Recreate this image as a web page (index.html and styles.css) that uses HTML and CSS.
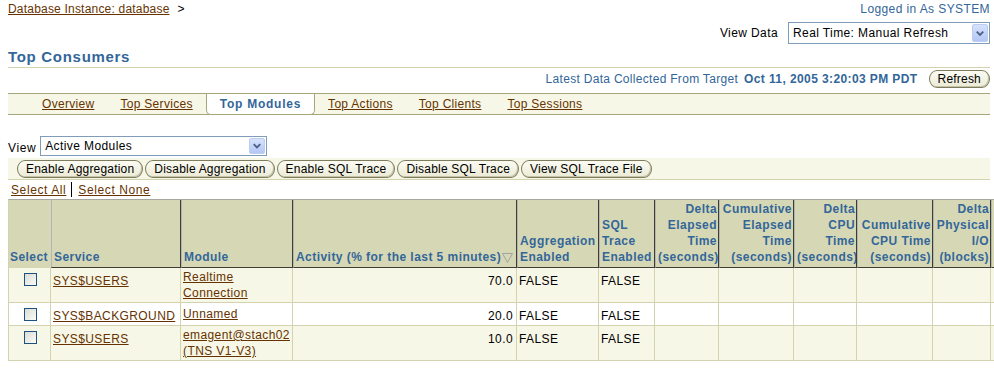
FILE: index.html
```html
<!DOCTYPE html>
<html>
<head>
<meta charset="utf-8">
<title>Top Consumers</title>
<link rel="stylesheet" href="styles.css">
</head>
<body>
<div class="page">
  <div class="top">
    <div class="crumbs"><a href="#">Database Instance: database</a><span class="sep">&gt;</span></div>
    <div class="user">Logged in As SYSTEM</div>
  </div>
  <div class="viewdata">
    <span>View Data</span>
    <div class="select wide"><span class="val">Real Time: Manual Refresh</span><span class="arrow"><svg width="15" height="16" viewBox="0 0 15 16"><path d="M4 6.5 L7.5 10 L11 6.5" fill="none" stroke="#4d6185" stroke-width="2"/></svg></span></div>
  </div>
  <h1>Top Consumers</h1>
  <div class="collected">
    <span>Latest Data Collected From Target</span>
    <b>Oct 11, 2005 3:20:03 PM PDT</b>
    <button class="btn refresh">Refresh</button>
  </div>
  <div class="tabs">
    <a class="tab" href="#">Overview</a>
    <a class="tab" href="#">Top Services</a>
    <span class="tab active">Top Modules</span>
    <a class="tab" href="#">Top Actions</a>
    <a class="tab" href="#">Top Clients</a>
    <a class="tab" href="#">Top Sessions</a>
  </div>
  <div class="viewrow">
    <span>View</span>
    <div class="select view"><span class="val">Active Modules</span><span class="arrow"><svg width="15" height="16" viewBox="0 0 15 16"><path d="M4 6 L7.5 9.5 L11 6" fill="none" stroke="#4d6185" stroke-width="2"/></svg></span></div>
  </div>
  <div class="btnbar">
    <button class="btn">Enable Aggregation</button>
    <button class="btn">Disable Aggregation</button>
    <button class="btn">Enable SQL Trace</button>
    <button class="btn">Disable SQL Trace</button>
    <button class="btn">View SQL Trace File</button>
  </div>
  <div class="selall"><a href="#">Select All</a><span class="bar"></span><a href="#">Select None</a></div>
  <table class="grid">
    <colgroup>
      <col style="width:42px"><col style="width:130px"><col style="width:112px"><col style="width:224px"><col style="width:82px"><col style="width:56px"><col style="width:64px"><col style="width:75px"><col style="width:63px"><col style="width:76px"><col style="width:58px"><col style="width:84px">
    </colgroup>
    <thead>
      <tr>
        <th class="sel">Select</th>
        <th class="s">Service</th>
        <th class="s">Module</th>
        <th class="s act">Activity (% for the last 5 minutes)<svg class="sort" width="11" height="10" viewBox="0 0 11 10"><path d="M0.5 0.5 H10.5 L5.5 9.5 Z" fill="none" stroke="#a3a3a3"/></svg></th>
        <th class="s">Aggregation<br>Enabled</th>
        <th class="s">SQL<br>Trace<br>Enabled</th>
        <th class="s r">Delta<br>Elapsed<br>Time<br>(seconds)</th>
        <th class="s r">Cumulative<br>Elapsed<br>Time<br>(seconds)</th>
        <th class="s r">Delta<br>CPU<br>Time<br>(seconds)</th>
        <th class="s r">Cumulative<br>CPU Time<br>(seconds)</th>
        <th class="s r">Delta<br>Physical<br>I/O<br>(blocks)</th>
        <th class="s r">Cumulative<br>Physical I/O<br>(blocks)</th>
      </tr>
    </thead>
    <tbody>
      <tr class="odd">
        <td class="c"><span class="cb"></span></td>
        <td><a href="#">SYS$USERS</a></td>
        <td class="m"><a href="#">Realtime<br>Connection</a></td>
        <td class="r">70.0</td>
        <td>FALSE</td>
        <td>FALSE</td>
        <td></td><td></td><td></td><td></td><td></td><td></td>
      </tr>
      <tr class="even">
        <td class="c"><span class="cb"></span></td>
        <td><a href="#">SYS$BACKGROUND</a></td>
        <td class="m"><a href="#">Unnamed</a></td>
        <td class="r">20.0</td>
        <td>FALSE</td>
        <td>FALSE</td>
        <td></td><td></td><td></td><td></td><td></td><td></td>
      </tr>
      <tr class="odd">
        <td class="c"><span class="cb"></span></td>
        <td><a href="#">SYS$USERS</a></td>
        <td class="m"><a href="#">emagent@stach02<br>(TNS V1-V3)</a></td>
        <td class="r">10.0</td>
        <td>FALSE</td>
        <td>FALSE</td>
        <td></td><td></td><td></td><td></td><td></td><td></td>
      </tr>
    </tbody>
  </table>
</div>
</body>
</html>
```
FILE: styles.css
```css
html, body {
  margin: 0;
  padding: 0;
  background: #fff;
  overflow: hidden;
}
body {
  font-family: "Liberation Sans", Arial, sans-serif;
  font-size: 12px;
  letter-spacing: 0.4px;
  color: #000;
}
a {
  color: #663300;
  text-decoration: underline;
}
.page {
  width: 982px;
  padding: 0 4px 0 8px;
}
.top {
  display: flex;
  justify-content: space-between;
  height: 18px;
  line-height: 19px;
}
.crumbs {
  letter-spacing: 0.2px;
}
.crumbs .sep {
  margin-left: 8px;
}
.user {
  color: #336699;
}
.viewdata {
  display: flex;
  justify-content: flex-end;
  align-items: center;
  gap: 10px;
  margin-top: 4px;
  height: 22px;
}
.select {
  box-sizing: border-box;
  border: 1px solid #7f9db9;
  background: #fff;
  display: flex;
  align-items: center;
  justify-content: space-between;
  padding-left: 4px;
  padding-right: 1px;
}
.select.wide {
  width: 202px;
  height: 22px;
}
.select.view {
  width: 227px;
  height: 20px;
}
.select .arrow {
  box-sizing: border-box;
  width: 16px;
  height: calc(100% - 2px);
  border: 1px solid #bccdf3;
  border-radius: 2px;
  background: linear-gradient(#d6e2fc, #b3c7f5);
  display: flex;
  align-items: center;
  justify-content: center;
}
.select .arrow svg {
  display: block;
}
h1 {
  margin: 0;
  padding: 4px 0 2px;
  font-size: 15px;
  line-height: 17px;
  font-weight: bold;
  letter-spacing: 0.7px;
  color: #336699;
  border-bottom: 1px solid #d3d3b0;
}
.collected {
  display: flex;
  justify-content: flex-end;
  align-items: center;
  gap: 6px;
  height: 18px;
  margin-top: 2px;
  color: #336699;
}
.collected > span {
  letter-spacing: 0.3px;
}
.collected b {
  letter-spacing: 0.4px;
  margin-right: 5px;
}
.btn {
  font-family: "Liberation Sans", Arial, sans-serif;
  font-size: 12px;
  letter-spacing: 0.2px;
  color: #000;
  height: 18px;
  line-height: 16px;
  padding: 0 8px;
  margin: 0;
  border: 1px solid #7d7d5e;
  border-radius: 8px / 9px;
  background: linear-gradient(#fbfbf3, #ecebd6);
  box-shadow: inset -1px -1px 0 #c4c3a8;
  cursor: pointer;
}
.tabs {
  display: flex;
  align-items: flex-start;
  margin-top: 5px;
  height: 20px;
  border-top: 1px solid #a6a67e;
  border-bottom: 1px solid #a6a67e;
  background: #f7f7e7;
  padding-left: 21px;
}
.tab {
  padding: 0 13px;
  line-height: 20px;
  letter-spacing: 0.3px;
}
.tab.active {
  background: #fff;
  border: 1px solid #a6a67e;
  border-top: none;
  border-radius: 0 0 5px 5px;
  font-weight: bold;
  color: #336699;
  letter-spacing: 0.75px;
  padding: 0 13px;
}
.viewrow {
  display: flex;
  align-items: center;
  gap: 4px;
  margin-top: 21px;
  height: 20px;
}
.viewrow > span {
  padding-top: 3px;
  letter-spacing: 0.6px;
}
.btnbar {
  display: flex;
  gap: 2px;
  margin-top: 2px;
  padding: 2px 9px 1px;
  background: #f7f7e7;
  border-bottom: 1px solid #d3d3b0;
}
.selall {
  display: flex;
  align-items: center;
  height: 19px;
  padding-left: 3px;
  letter-spacing: 0.6px;
}
.selall .bar {
  width: 1px;
  height: 15px;
  background: #000;
  margin: 0 6px 0 5px;
}
.grid {
  border-collapse: separate;
  border-spacing: 0;
  table-layout: fixed;
  width: 1066px;
  border-top: 1px solid #a8a8a0;
  border-left: 1px solid #d3d3b0;
}
.grid th {
  background: #d6d8b5;
  color: #336699;
  font-weight: bold;
  letter-spacing: 0.45px;
  text-align: left;
  vertical-align: bottom;
  line-height: 16px;
  padding: 1px 1px 2px 2px;
  white-space: nowrap;
  overflow: hidden;
}
.grid th.sel {
  padding-left: 1px;
  border-bottom: 1px solid #d6d8b5;
}
.grid th.s {
  border-left: 1px solid #b4b4b0;
  border-right: 1px solid #3d3d33;
  border-bottom: 1px solid #3d3d33;
}
.grid th.r {
  text-align: right;
}
.grid th.act .sort {
  float: right;
  margin: 4px 2px 0 0;
}
.grid td {
  line-height: 16px;
  padding: 5px 2px 1px 2px;
  vertical-align: top;
  white-space: nowrap;
  border-right: 1px solid #d3d3b0;
  border-bottom: 1px solid #d3d3b0;
}
.grid td.m {
  vertical-align: middle;
  padding-top: 1px;
  padding-bottom: 1px;
}
.grid td.r {
  text-align: right;
  padding-right: 3px;
}
.grid td.c {
  text-align: center;
  padding-left: 3px;
}
.grid tr.odd td {
  background: #f7f7e7;
}
.grid tr.even td {
  background: #fff;
}
.cb {
  display: inline-block;
  box-sizing: border-box;
  width: 13px;
  height: 13px;
  margin-top: 0;
  vertical-align: top;
  border: 1px solid #1c5180;
  background: linear-gradient(135deg, #dcdcd4, #fbfbf9);
}
```
